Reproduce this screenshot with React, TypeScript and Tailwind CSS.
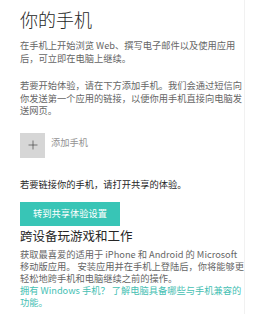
import { Plus } from "lucide-react";

const FONT = { fontFamily: '"Noto Sans CJK SC", "Noto Sans", sans-serif' };

export default function App() {
  return (
    <div className="w-[256px] h-[314px] overflow-hidden bg-white" style={FONT}>
      <div className="w-[245px] h-full border-r border-[#f1f1f1] pl-5 pt-[7px]">
        <h1 className="text-[18px] leading-[24px] text-[#262626] font-light">你的手机</h1>

        <p className="mt-2 w-[223px] text-[9.25px] leading-[12.5px] text-[#666]">
          在手机上开始浏览 Web、撰写电子邮件以及使用应用后，可立即在电脑上继续。
        </p>

        <p className="mt-[15px] w-[223px] text-[9.25px] leading-[12.5px] text-[#666]">
          若要开始体验，请在下方添加手机。我们会通过短信向你发送第一个应用的链接，以便你用手机直接向电脑发送网页。
        </p>

        <div className="mt-[16px] flex items-start gap-[6px]">
          <div className="w-[25px] h-[25px] bg-[#d6d6d6] flex items-center justify-center">
            <Plus size={14} strokeWidth={1.1} className="text-[#3a3a3a]" />
          </div>
          <span className="mt-[3px] text-[9.25px] leading-[12.5px] text-[#939393]">添加手机</span>
        </div>

        <p className="mt-[20px] text-[9.25px] leading-[12.5px] text-[#262626]">
          若要链接你的手机，请打开共享的体验。
        </p>

        <button className="mt-[12px] w-[100px] h-[24px] bg-[#38c5b6] text-white text-[9.25px] leading-none flex items-center justify-center">
          转到共享体验设置
        </button>

        <h2 className="mt-[2px] text-[12.5px] leading-[16px] text-[#262626] font-normal">跨设备玩游戏和工作</h2>

        <p className="mt-[4px] w-[228px] text-[9.25px] leading-[12px] text-[#666]">
          获取最喜爱的适用于 iPhone 和 Android 的 Microsoft 移动版应用。 安装应用并在手机上登陆后，你将能够更轻松地跨手机和电脑继续之前的操作。
        </p>

        <p className="mt-0 w-[223px] text-[9.25px] leading-[12px] text-[#45c0b3]">
          拥有 Windows 手机？ 了解电脑具备哪些与手机兼容的功能。
        </p>
      </div>
    </div>
  );
}
